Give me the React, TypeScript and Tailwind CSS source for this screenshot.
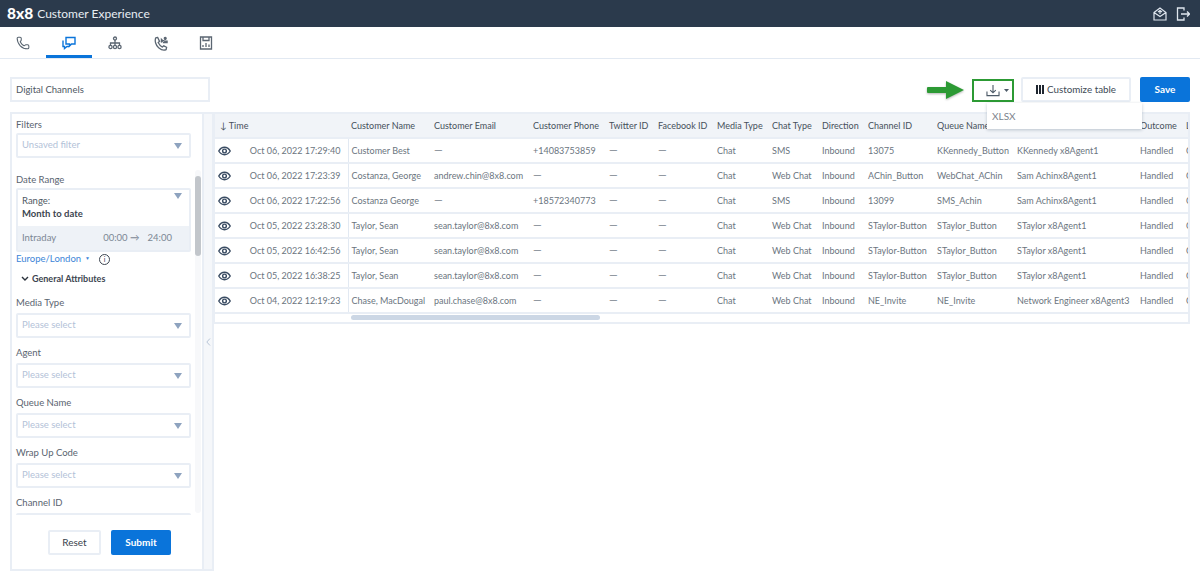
import { Phone } from 'lucide-react';

const rows = [
  ['Oct 06, 2022 17:29:40', 'Customer Best', '—', '+14083753859', 'Chat', 'SMS', '13075', 'KKennedy_Button', 'KKennedy x8Agent1'],
  ['Oct 06, 2022 17:23:39', 'Costanza, George', 'andrew.chin@8x8.com', '—', 'Chat', 'Web Chat', 'AChin_Button', 'WebChat_AChin', 'Sam Achinx8Agent1'],
  ['Oct 06, 2022 17:22:56', 'Costanza George', '—', '+18572340773', 'Chat', 'SMS', '13099', 'SMS_Achin', 'Sam Achinx8Agent1'],
  ['Oct 05, 2022 23:28:30', 'Taylor, Sean', 'sean.taylor@8x8.com', '—', 'Chat', 'Web Chat', 'STaylor-Button', 'STaylor_Button', 'STaylor x8Agent1'],
  ['Oct 05, 2022 16:42:56', 'Taylor, Sean', 'sean.taylor@8x8.com', '—', 'Chat', 'Web Chat', 'STaylor-Button', 'STaylor_Button', 'STaylor x8Agent1'],
  ['Oct 05, 2022 16:38:25', 'Taylor, Sean', 'sean.taylor@8x8.com', '—', 'Chat', 'Web Chat', 'STaylor-Button', 'STaylor_Button', 'STaylor x8Agent1'],
  ['Oct 04, 2022 12:19:23', 'Chase, MacDougal', 'paul.chase@8x8.com', '—', 'Chat', 'Web Chat', 'NE_Invite', 'NE_Invite', 'Network Engineer x8Agent3'],
];

const Caret = () => (
  <svg width="8" height="6" viewBox="0 0 8 6" className="shrink-0">
    <path d="M0 0h8L4 6z" fill="#8ea3bf" />
  </svg>
);

const Select = ({ text }: { text: string }) => (
  <div className="h-[25px] border-2 border-[#e9eef5] rounded-[2px] flex items-center justify-between pl-[4px] pr-[7px] text-[#b3c2d8]">
    <span>{text}</span>
    <Caret />
  </div>
);

const Field = ({ label }: { label: string }) => (
  <div className="mb-[6px]">
    <div className="h-[19px] leading-[18px] text-[#5a6470]">{label}</div>
    <Select text="Please select" />
  </div>
);

const Eye = () => (
  <svg width="13" height="10" viewBox="0 0 14 10" fill="none" stroke="#3a4c63" strokeWidth="1.500">
    <path d="M.8 5C2.500 2.200 4.600 1 7 1s4.500 1.200 6.200 4C11.500 7.800 9.400 9 7 9S2.500 7.800.8 5z" />
    <circle cx="7" cy="5" r="2" />
  </svg>
);

// long dash, the table font's own one is too short at this size
const Dash = ({ value }: { value: string }) =>
  value === '—' ? <span className="text-[11px] leading-none text-[#7d8690]">—</span> : <>{value}</>;

export default function App() {
  return (
    <div className="w-[1200px] h-[586px] overflow-hidden bg-white text-[9.5px] text-[#5f6873] font-['Lato','Noto_Sans',sans-serif]">
      <header className="h-[27px] bg-[#2b3a4c] flex items-center justify-between pl-[7px] pr-[10px] text-white">
        <div className="flex items-center gap-[4px]">
          <span className="text-[15.5px] font-black leading-none">8x8</span>
          <span className="text-[12px] text-[#e8edf3]">Customer Experience</span>
        </div>
        <div className="flex items-center gap-[9px]">
          <svg width="14" height="14" viewBox="0 0 14 14" fill="none" stroke="#dfe6ee" strokeWidth="1.200">
            <path d="M1 5.500 7 1l6 4.500V13H1zM1 5.500l6 4 6-4M5 5l2-1.500L9 5M7 3.500V7" />
          </svg>
          <svg width="14" height="14" viewBox="0 0 14 14" fill="none" stroke="#dfe6ee" strokeWidth="1.300">
            <path d="M8 3.500V1H1.500v12H8v-2.500M5 7h8.500M11 4.500 13.500 7 11 9.500" />
          </svg>
        </div>
      </header>

      <nav className="h-[32px] border-b border-[#e2e9f2] flex items-start text-[#57636f]">
        <div className="w-[46px] h-[31px] pt-[1px] flex items-center justify-center">
          <Phone size={14} strokeWidth={1.800} />
        </div>
        <div className="w-[46px] h-[31px] pt-[4px] border-b-[3px] border-[#0a74da] flex items-center justify-center">
          <svg width="14" height="14" viewBox="0 0 14 14" fill="none" stroke="#0a74da" strokeWidth="1.400">
            <path d="M4 1.500h9v6.500H9.500L7.500 10V8H4zM1 4.500v6h1.500v2L5 10.500h2" />
          </svg>
        </div>
        <div className="w-[45px] h-[31px] pt-[1px] flex items-center justify-center">
          <svg width="14" height="14" viewBox="0 0 14 14" fill="none" stroke="#5b6672" strokeWidth="1.300">
            <circle cx="7" cy="2.500" r="1.500" />
            <circle cx="2.500" cy="11" r="1.600" />
            <circle cx="7" cy="11" r="1.600" />
            <circle cx="11.500" cy="11" r="1.600" />
            <path d="M7 4v5.500M2.500 9.500V7h9v2.500" />
          </svg>
        </div>
        <div className="w-[46px] h-[31px] pt-[1px] flex items-center justify-center">
          <svg width="15" height="15" viewBox="0 0 16 16" fill="none" stroke="#5b6672" strokeWidth="1.400">
            <path d="M5 1.500 3 2C1.500 5 3 10 6 12.500s6 3 8 2l.5-2.500-3-1.500-1.500 1.300C8 11 6.500 9 5.500 7l1.500-1.300z" />
            <path d="M9 7V3.500L10.500 5h1.500M12 2.500a1 1 0 1 1 0 .1M10.500 7h4.500V5.500h-3" fill="#5b6672" />
          </svg>
        </div>
        <div className="w-[46px] h-[31px] pt-[1px] flex items-center justify-center">
          <svg width="14" height="14" viewBox="0 0 14 14" fill="none" stroke="#5b6672" strokeWidth="1.300">
            <path d="M1.500 1h11v12h-11zM4 1v3.500h6V1M4 11V9M7 11V7M10 11V8.500" />
          </svg>
        </div>
      </nav>

      <div className="pt-[18px] pl-[10px] pr-[10px]">
        <div className="h-[25px] flex items-center justify-between relative">
          <div className="w-[200px] h-[25px] border-2 border-[#e9eef5] flex items-center pl-[4px] pt-[1px] text-[#4f5964]">
            Digital Channels
          </div>
          <div className="flex items-center">
            <svg width="38" height="18" viewBox="0 0 38 18" className="mr-[7px] drop-shadow-[0_1px_1px_rgba(0,0,0,0.3)]">
              <path d="M1 6h18V0l18 9-18 9v-6H1a1 1 0 0 1-1-1V7a1 1 0 0 1 1-1z" fill="#2c9a34" />
            </svg>
            <div className="w-[42px] h-[23px] border-2 border-[#2c9a34] flex items-center justify-center gap-[4px] pl-[9px] mr-[7px] mt-[2px]">
              <svg width="14" height="13" viewBox="0 0 15 14" fill="none" stroke="#4d5a68" strokeWidth="1.200" className="shrink-0">
                <path d="M7.500 1v8.500M4.500 6.500l3 3 3-3M1 8v4.500h13V8" />
              </svg>
              <svg width="5" height="3" viewBox="0 0 5 3" className="shrink-0"><path d="M0 0h5L2.500 3z" fill="#4d5a68" /></svg>
            </div>
            <div className="w-[110px] h-[25px] border-2 border-[#e9eef5] rounded-[2px] flex items-center justify-center text-[9.8px] text-[#414b56]">
              <span className="flex gap-[1px]">
                <i className="w-[2px] h-[9px] bg-[#1f2630]" />
                <i className="w-[2px] h-[9px] bg-[#1f2630]" />
                <i className="w-[2px] h-[9px] bg-[#1f2630]" />
              </span>
              <span className="ml-[3px]">Customize table</span>
            </div>
            <div className="w-[50px] h-[25px] ml-[9px] bg-[#0a74da] rounded-[2px] flex items-center justify-center text-white font-bold text-[10px]">
              Save
            </div>
          </div>
          <div className="absolute left-[977px] top-[26px] w-[155px] h-[26px] bg-white shadow-[0_1px_3px_rgba(60,80,110,0.3)] pl-[5px] pt-[6px] text-[10px] text-[#7b838c] z-10">
            XLSX
          </div>
        </div>

        <div className="flex mt-[10px]">
          <aside className="w-[194px] h-[459px] border-2 border-[#e9eef5] flex flex-col shrink-0 text-[#5a6470]">
            <div className="flex h-[401px] shrink-0">
              <div className="w-[179px] pl-[4px] shrink-0 overflow-hidden h-[401px]">
                <div className="h-[19px] leading-[21px]">Filters</div>
                <Select text="Unsaved filter" />
                <div className="h-[18px] leading-[19px] mt-[12px]">Date Range</div>
                <div className="h-[64px] border-2 border-[#e9eef5] rounded-[2px] relative">
                  <div className="pl-[4px] pt-[4px] text-[#4f5964] leading-[13px]">
                    Range:
                    <div className="font-bold text-[#3c4550]">Month to date</div>
                  </div>
                  <div className="absolute right-[7px] top-[3px]"><Caret /></div>
                  <div className="absolute left-0 right-0 bottom-0 h-[24px] bg-[#eef2f7] pl-[4px] flex items-center text-[#7b8794]">
                    <span>Intraday</span>
                    <span className="ml-[47px]">00:00 → </span>
                    <span className="ml-[8px]">24:00</span>
                  </div>
                </div>
                <div className="flex items-center h-[14px] text-[#3d85d8]">
                  Europe/London
                  <span className="ml-[4px] text-[5px]">▼</span>
                  <span className="ml-[9px] w-[11px] h-[11px] rounded-full border border-[#3c4550] text-[#3c4550] text-[7px] leading-[9px] text-center">i</span>
                </div>
                <div className="flex items-center h-[14px] mt-[6px] pl-[5px] font-bold text-[9px] text-[#3c4550]">
                  <svg width="8" height="6" viewBox="0 0 8 6" fill="none" stroke="#2a323c" strokeWidth="1.400" className="mr-[3px]">
                    <path d="M1 1l3 3 3-3" />
                  </svg>
                  General Attributes
                </div>
                <div className="mt-[8px]"><Field label="Media Type" /></div>
                <Field label="Agent" />
                <Field label="Queue Name" />
                <Field label="Wrap Up Code" />
                <div className="h-[19px] leading-[18px] text-[#5a6470]">Channel ID</div>
                <div className="h-[25px] border-2 border-[#e9eef5] rounded-[2px]" />
              </div>
              <div className="w-[6px] ml-[4px] mt-[56px] h-[343px] bg-[#f7f8fa] relative rounded-[3px]">
                <div className="w-[6px] h-[80px] mt-[6px] rounded-[3px] bg-[#c2c6cb]" />
              </div>
            </div>
            <div className="flex gap-[10px] pl-[36px] pt-[15px]">
              <div className="w-[53px] h-[25px] border-2 border-[#e9eef5] rounded-[2px] flex items-center justify-center text-[10px] text-[#39424d]">Reset</div>
              <div className="w-[60px] h-[25px] bg-[#0a74da] rounded-[2px] flex items-center justify-center text-[10px] font-bold text-white">Submit</div>
            </div>
          </aside>
          <div className="w-[10px] h-[459px] bg-[#f5f7fa] border-r-2 border-t-2 border-b-2 border-[#e9eef5] flex items-center justify-center shrink-0">
            <svg width="5" height="8" viewBox="0 0 5 8" fill="none" stroke="#b7c4d6" strokeWidth="1"><path d="M4 .5.800 4 4 7.500" /></svg>
          </div>

          <div className="w-[976px] shrink-0 h-[212px] border-2 border-l border-[#e9eef5] overflow-hidden text-[9px] text-[#6b7580]">
            <table className="table-fixed border-collapse w-[975px]">
              <colgroup>
                <col className="w-[133px]" /><col className="w-[83px]" /><col className="w-[99px]" /><col className="w-[76px]" />
                <col className="w-[49px]" /><col className="w-[59px]" /><col className="w-[55px]" /><col className="w-[50px]" />
                <col className="w-[46px]" /><col className="w-[69px]" /><col className="w-[80px]" /><col className="w-[123px]" />
                <col className="w-[46px]" /><col className="w-[7px]" />
              </colgroup>
              <thead>
                <tr className="h-[24px] bg-[#f1f4f8] text-[#46505b] border-b-2 border-[#e9eef5]">
                  <th className="font-normal text-left pl-[5px] whitespace-nowrap">↓ Time</th>
                  {['Customer Name', 'Customer Email', 'Customer Phone', 'Twitter ID', 'Facebook ID', 'Media Type', 'Chat Type', 'Direction', 'Channel ID', 'Queue Name', '', 'Outcome', 'L'].map((h, i) => (
                    <th key={i} className="font-normal text-left pl-[3px] whitespace-nowrap">{h}</th>
                  ))}
                </tr>
              </thead>
              <tbody>
                {rows.map((r) => (
                  <tr key={r[0]} className="h-[25px] border-b-2 border-[#e9eef5]">
                    <td className="border-r border-[#e2e9f2] pl-[3px]">
                      <div className="flex items-center justify-between pr-[7px] whitespace-nowrap">
                        <Eye />
                        <span>{r[0]}</span>
                      </div>
                    </td>
                    <td className="pl-[3px] whitespace-nowrap">{r[1]}</td>
                    <td className="pl-[3px] whitespace-nowrap"><Dash value={r[2]} /></td>
                    <td className="pl-[3px] whitespace-nowrap"><Dash value={r[3]} /></td>
                    <td className="pl-[3px]"><Dash value="—" /></td>
                    <td className="pl-[3px]"><Dash value="—" /></td>
                    <td className="pl-[3px]">{r[4]}</td>
                    <td className="pl-[3px] whitespace-nowrap">{r[5]}</td>
                    <td className="pl-[3px]">Inbound</td>
                    <td className="pl-[3px] whitespace-nowrap">{r[6]}</td>
                    <td className="pl-[3px] whitespace-nowrap">{r[7]}</td>
                    <td className="pl-[3px] whitespace-nowrap">{r[8]}</td>
                    <td className="pl-[3px]">Handled</td>
                    <td className="pl-[3px]">C</td>
                  </tr>
                ))}
              </tbody>
            </table>
            <div className="h-[7px] pt-[1px]">
              <div className="ml-[136px] w-[249px] h-[5px] rounded-[3px] bg-[#ccd7e5]" />
            </div>
          </div>
        </div>
      </div>
    </div>
  );
}
